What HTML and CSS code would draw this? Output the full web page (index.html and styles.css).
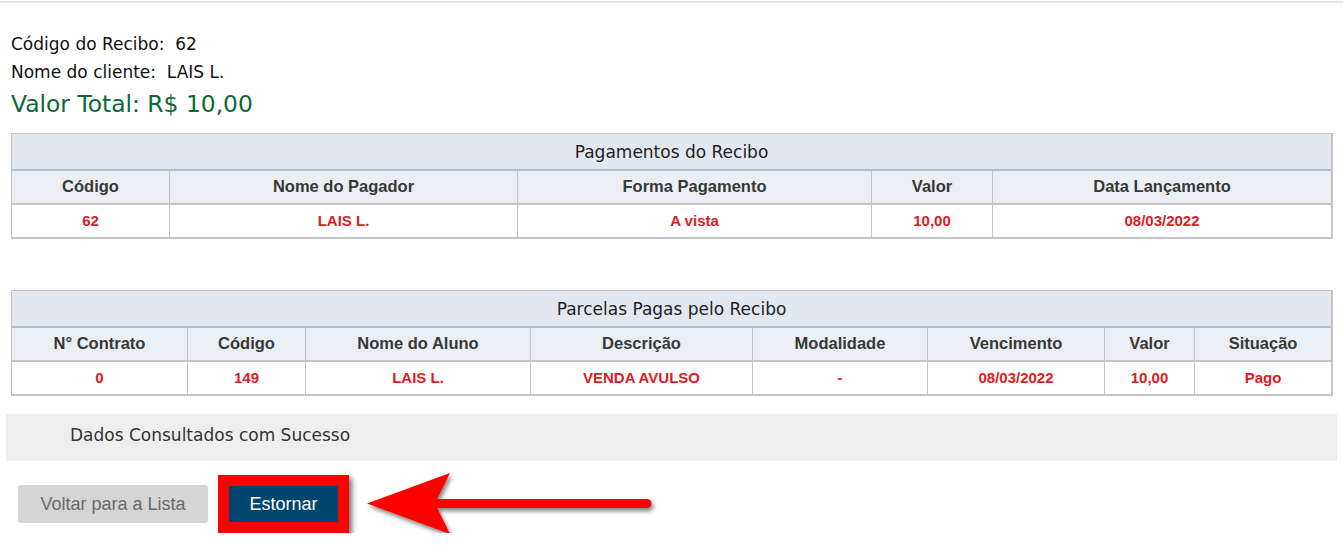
FILE: index.html
```html
<!DOCTYPE html>
<html lang="pt">
<head>
<meta charset="utf-8">
<title>Recibo</title>
<link rel="stylesheet" href="styles.css">
</head>
<body>
<div class="topline"></div>
<div class="info">
  <div class="line">Código do Recibo:&nbsp; 62</div>
  <div class="line">Nome do cliente:&nbsp; LAIS L.</div>
  <div class="total">Valor Total: R$ 10,00</div>
</div>

<table class="grid t1">
  <colgroup>
    <col class="c1"><col class="c2"><col class="c3"><col class="c4"><col class="c5">
  </colgroup>
  <tr><th class="cap" colspan="5">Pagamentos do Recibo</th></tr>
  <tr class="head">
    <th>Código</th>
    <th>Nome do Pagador</th>
    <th>Forma Pagamento</th>
    <th>Valor</th>
    <th class="last">Data Lançamento</th>
  </tr>
  <tr class="data">
    <td>62</td>
    <td>LAIS L.</td>
    <td>A vista</td>
    <td>10,00</td>
    <td class="last">08/03/2022</td>
  </tr>
</table>

<table class="grid t2">
  <colgroup>
    <col class="d1"><col class="d2"><col class="d3"><col class="d4"><col class="d5"><col class="d6"><col class="d7"><col class="d8">
  </colgroup>
  <tr><th class="cap" colspan="8">Parcelas Pagas pelo Recibo</th></tr>
  <tr class="head">
    <th>N° Contrato</th>
    <th>Código</th>
    <th>Nome do Aluno</th>
    <th>Descrição</th>
    <th>Modalidade</th>
    <th>Vencimento</th>
    <th>Valor</th>
    <th class="last">Situação</th>
  </tr>
  <tr class="data">
    <td>0</td>
    <td>149</td>
    <td>LAIS L.</td>
    <td>VENDA AVULSO</td>
    <td>-</td>
    <td>08/03/2022</td>
    <td>10,00</td>
    <td class="last">Pago</td>
  </tr>
</table>

<div class="msg">Dados Consultados com Sucesso</div>

<div class="actions">
  <button class="btn btn-back">Voltar para a Lista</button>
  <span class="highlight"><button class="btn btn-primary">Estornar</button></span>
  <svg class="arrow" width="300" height="80" viewBox="0 0 300 80">
    <defs>
      <filter id="sh" x="-10%" y="-30%" width="130%" height="180%">
        <feDropShadow dx="2" dy="3" stdDeviation="2" flood-color="#000" flood-opacity="0.5"/>
      </filter>
    </defs>
    <g filter="url(#sh)" fill="#ff0000">
      <line x1="76" y1="37.5" x2="287" y2="37.5" stroke="#ff0000" stroke-width="9" stroke-linecap="round"/>
      <polygon points="7,37.5 90,7 75,37.5 90,68"/>
    </g>
  </svg>
</div>
</body>
</html>
```

FILE: styles.css
```css
html, body {
  margin: 0;
  padding: 0;
  background: #ffffff;
}

body {
  font-family: "DejaVu Sans", sans-serif;
  color: #111111;
}

.topline {
  margin-top: 1px;
  height: 2px;
  background: #e4e4e4;
}

.info {
  padding: 27px 0 0 11px;
}

.line {
  font-size: 17px;
  line-height: 28px;
  height: 28px;
  color: #111111;
}

.total {
  margin-top: 2px;
  font-size: 23.4px;
  line-height: 32px;
  height: 32px;
  color: #0d6837;
}

.grid {
  margin-left: 11px;
  width: 1322px;
  table-layout: fixed;
  border-collapse: separate;
  border-spacing: 0;
  border-top: 1px solid #c4c4c4;
  border-left: 1px solid #c4c4c4;
  border-right: 2px solid #c4c4c4;
  border-bottom: 2px solid #c4c4c4;
  box-sizing: border-box;
}

.t1 {
  margin-top: 13px;
}

.t2 {
  margin-top: 51px;
}

.grid th,
.grid td {
  padding: 0;
  box-sizing: border-box;
  text-align: center;
  vertical-align: middle;
}

.grid .cap {
  height: 37px;
  background: #e3e8f0;
  border-bottom: 2px solid #aebfd0;
  font-family: "DejaVu Sans", sans-serif;
  font-weight: normal;
  font-size: 17px;
  color: #222222;
}

.head th {
  height: 34px;
  padding-bottom: 1px;
  background: #ebeff3;
  border-bottom: 2px solid #c4c4c4;
  border-right: 1px solid #c4c4c4;
  font-family: "Liberation Sans", Arial, sans-serif;
  font-weight: bold;
  font-size: 16.5px;
  color: #383838;
}

.data td {
  height: 32px;
  padding-bottom: 2px;
  background: #ffffff;
  border-right: 1px solid #c4c4c4;
  font-family: "Liberation Sans", Arial, sans-serif;
  font-weight: bold;
  font-size: 15px;
  color: #e01b24;
}

.grid .last {
  border-right: none;
}

.c1 { width: 158px; }
.c2 { width: 348px; }
.c3 { width: 354px; }
.c4 { width: 121px; }
.c5 { width: 338px; }

.d1 { width: 176px; }
.d2 { width: 118px; }
.d3 { width: 225px; }
.d4 { width: 222px; }
.d5 { width: 175px; }
.d6 { width: 177px; }
.d7 { width: 90px; }
.d8 { width: 136px; }

.msg {
  margin: 18px 0 0 6px;
  width: 1331px;
  height: 47px;
  box-sizing: border-box;
  padding-left: 64px;
  line-height: 42px;
  background: #eeeeee;
  font-size: 17px;
  color: #333333;
}

.actions {
  position: relative;
  margin-top: 14px;
  padding-left: 18px;
  display: flex;
  align-items: center;
  gap: 10px;
  height: 58px;
}

.btn {
  border: none;
  margin: 0;
  padding: 0;
  font-family: "Liberation Sans", Arial, sans-serif;
  font-size: 18px;
  cursor: pointer;
}

.btn-back {
  width: 190px;
  height: 38px;
  border-radius: 3px;
  background: #d5d5d5;
  color: #6a6a6a;
}

.highlight {
  display: inline-flex;
  border: 11px solid #ff0000;
  box-shadow: 3px 3px 5px rgba(0, 0, 0, 0.55);
}

.btn-primary {
  width: 109px;
  height: 36px;
  background: #00466e;
  color: #ffffff;
}

.arrow {
  position: absolute;
  left: 360px;
  top: -9px;
}
```
